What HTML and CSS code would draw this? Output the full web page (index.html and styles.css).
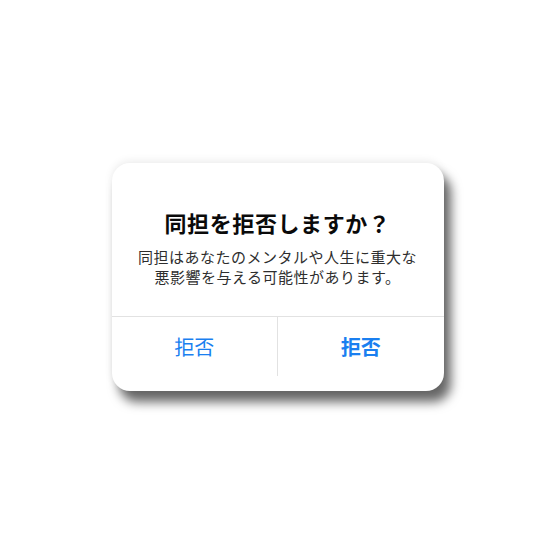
FILE: index.html
```html
<!DOCTYPE html>
<html lang="ja">
  <head>
    <meta charset="utf-8">
    <meta name="viewport" content="width=device-width,initial-scale=1.0">
    <title>同担拒否</title>
    <link rel="stylesheet" href="styles.css">
  </head>
  <body>
    <div class="alert">
      <div class="alert-body">
        <div class="alert-title">同担を拒否しますか？</div>
        <div class="alert-message">
          同担はあなたのメンタルや人生に重大な<br>悪影響を与える可能性があります。
        </div>
      </div>
      <div class="alert-actions">
        <div class="alert-button">拒否</div>
        <div class="alert-button alert-button-bold">拒否</div>
      </div>
    </div>
  </body>
</html>
```

FILE: styles.css
```css
body {
  margin: 0;
  width: 554px;
  height: 554px;
  background-color: #ffffff;
  font-family: "Noto Sans CJK JP", "Noto Sans", sans-serif;
  display: flex;
  align-items: center;
  justify-content: center;
}
.alert {
  width: 332px;
  height: 228px;
  margin-left: 1px;
  background-color: #ffffff;
  border-radius: 18px;
  box-shadow: 7px 11px 11px rgba(0, 0, 0, 0.6), 0 -2px 8px rgba(0, 0, 0, 0.08);
  display: flex;
  flex-direction: column;
}
.alert-body {
  padding: 45px 10px 29px;
  text-align: center;
  border-bottom: 1px solid #e2e2e2;
}
.alert-title {
  font-size: 22px;
  line-height: 28px;
  font-weight: 700;
  letter-spacing: 0.6px;
  color: #0a0a0a;
}
.alert-message {
  margin-top: 11px;
  font-size: 15px;
  line-height: 20px;
  letter-spacing: 0.5px;
  color: #2e2e2e;
}
.alert-actions {
  display: flex;
  height: 59px;
}
.alert-button {
  flex: 1;
  padding-top: 18px;
  font-size: 20px;
  line-height: 24px;
  text-align: center;
  color: #1a7ff0;
}
.alert-button + .alert-button {
  border-left: 1px solid #e2e2e2;
}
.alert-button-bold {
  font-weight: 700;
}
```
